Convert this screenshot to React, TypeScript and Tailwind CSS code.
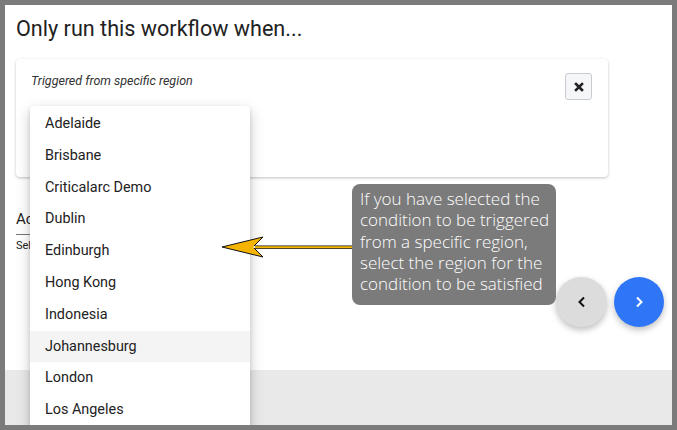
import React from "react";

const regions = [
  "Adelaide",
  "Brisbane",
  "Criticalarc Demo",
  "Dublin",
  "Edinburgh",
  "Hong Kong",
  "Indonesia",
  "Johannesburg",
  "London",
  "Los Angeles",
];

export default function App() {
  return (
    <div
      className="w-[677px] h-[430px] bg-[#7b7b7b] p-[5px] overflow-hidden"
      style={{ fontFamily: "Roboto, 'Liberation Sans', sans-serif" }}
    >
      <div className="relative w-full h-full flex flex-col bg-white overflow-hidden">
        {/* main content */}
        <div className="h-[365px] flex flex-col pl-[11px] pr-[8px] pt-[10px]">
          <h1 className="text-[21.6px] leading-[28px] text-[#212121]">Only run this workflow when...</h1>
          <div className="mt-[16px] w-[592px] h-[118px] rounded-[4px] bg-white shadow-[0_1px_3px_rgba(0,0,0,0.25)] pl-[15px] pr-[16px] pt-[14px] flex justify-between items-start">
            <div className="text-[12.5px] italic leading-[16px] text-[#333]">Triggered from specific region</div>
            <button className="w-[27px] h-[27px] flex items-center justify-center rounded-[3px] border border-[#c9ccd1] bg-[#f5f6f8]">
              <svg width="10" height="10" viewBox="0 0 10 10">
                <path d="M2 2 L8 8 M8 2 L2 8" stroke="#222" strokeWidth="2.6" strokeLinecap="square" />
              </svg>
            </button>
          </div>
          <div className="mt-[33px] w-[120px]">
            <div className="w-[14px] overflow-hidden border-b border-[#777] pb-[6px]">
              <div className="text-[15px] leading-[18px] text-[#222] whitespace-nowrap">Actions</div>
            </div>
            <div className="w-[14px] overflow-hidden mt-[4px]">
              <div className="text-[11px] leading-[14px] text-[#222] whitespace-nowrap">Select</div>
            </div>
          </div>
          <div className="mt-[24px] flex justify-end gap-[7px]">
            <button className="w-[51px] h-[50px] rounded-full bg-[#dcdcdc] shadow-[0_3px_6px_rgba(0,0,0,0.25)] flex items-center justify-center">
              <svg width="10" height="12" viewBox="0 0 10 12">
                <path d="M7 1.5 L2.5 6 L7 10.5" stroke="#111" strokeWidth="2" fill="none" />
              </svg>
            </button>
            <button className="w-[50px] h-[50px] rounded-full bg-[#2f76f6] shadow-[0_3px_6px_rgba(0,0,0,0.25)] flex items-center justify-center">
              <svg width="10" height="12" viewBox="0 0 10 12">
                <path d="M3 1.5 L7.5 6 L3 10.5" stroke="#fff" strokeWidth="2" fill="none" />
              </svg>
            </button>
          </div>
        </div>
        <div className="flex-1 bg-[#e9e9e9]" />

        {/* dropdown menu */}
        <div className="absolute left-[25px] top-[101px] w-[220px] bg-white rounded-[4px] pt-[2px] pb-[12px] shadow-[0_5px_14px_rgba(0,0,0,0.22),0_2px_4px_rgba(0,0,0,0.12)]">
          {regions.map((r) => (
            <div
              key={r}
              className={`h-[31.8px] flex items-center pl-[15px] text-[14.4px] text-[#222] ${r === "Johannesburg" ? "bg-[#f4f4f4]" : ""}`}
            >
              {r}
            </div>
          ))}
        </div>

        {/* arrow */}
        <svg className="absolute left-[214px] top-[229px]" width="136" height="28" viewBox="0 0 136 28">
          <rect x="36" y="11.5" width="100" height="3.4" fill="#111" />
          <rect x="36" y="12.2" width="100" height="2" fill="#f5b400" />
          <path d="M3 13 L44 3 L34 13 L44 23 Z" fill="#f5b400" />
          <path d="M3 13 L44 3 M44 23 L3 13" stroke="#111" strokeWidth="1" fill="none" />
          <path d="M44 3 L35 12 M35 14 L44 23" stroke="#111" strokeWidth="1" fill="none" />
        </svg>

        {/* tooltip */}
        <div
          className="absolute left-[347px] top-[179px] w-[204px] h-[121px] rounded-[8px] bg-[#7b7b7b] pl-[8px] pr-[2px] pt-[4px] text-white text-[17px] leading-[21.3px] font-light"
          style={{ fontFamily: "'Open Sans', Lato, sans-serif" }}
        >
          If you have selected the condition to be triggered from a specific region, select the region for the condition to be satisfied
        </div>
      </div>
    </div>
  );
}
